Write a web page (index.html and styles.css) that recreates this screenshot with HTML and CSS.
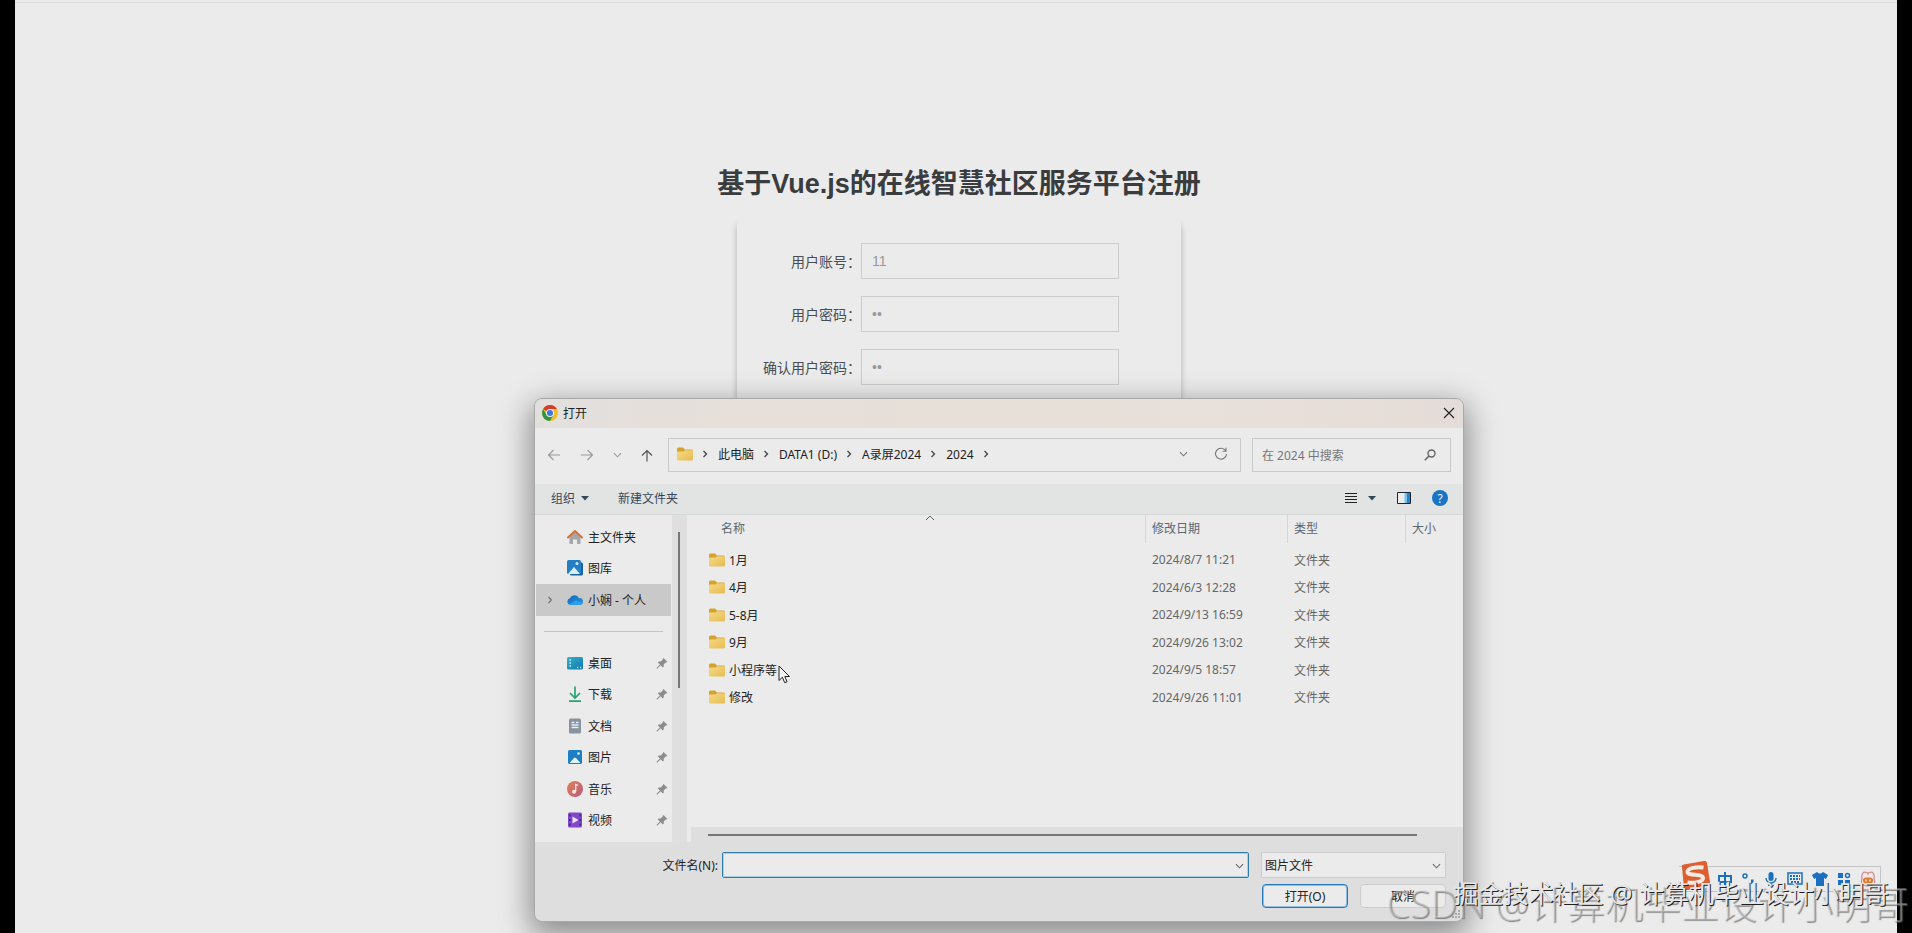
FILE: index.html
```
<!DOCTYPE html>
<html lang="zh-CN">
<head>
    <meta charset="UTF-8">
    <meta name="viewport" content="width=device-width, initial-scale=1.0">
    <title>基于Vue.js的在线智慧社区服务平台注册</title>
    <link rel="stylesheet" href="styles.css">
</head>
<body>
    <!-- shared icons -->
    <svg class="defs" width="0" height="0">
        <defs>
            <linearGradient id="folderFill" x1="0" y1="0" x2="1" y2="1">
                <stop offset="0" stop-color="#f6d988"/>
                <stop offset="1" stop-color="#e6bc50"/>
            </linearGradient>
            <linearGradient id="cloudFill" x1="0" y1="0" x2="1" y2="1">
                <stop offset="0" stop-color="#1265b8"/>
                <stop offset="1" stop-color="#2c9be6"/>
            </linearGradient>
            <linearGradient id="deskFill" x1="0" y1="0" x2="1" y2="1">
                <stop offset="0" stop-color="#35b3c4"/>
                <stop offset="1" stop-color="#1274b6"/>
            </linearGradient>
            <linearGradient id="musicFill" x1="0" y1="0" x2="1" y2="1">
                <stop offset="0" stop-color="#e08257"/>
                <stop offset="1" stop-color="#b85a7c"/>
            </linearGradient>
        </defs>
        <symbol id="folder" viewBox="0 0 16 14">
            <path d="M0 2a1.5 1.5 0 0 1 1.5-1.500h4.500l2 2h6.500A1.500 1.500 0 0 1 16 4v3H0z" fill="#d5a32c"/>
            <path d="M0 5.500a1 1 0 0 1 1-1h5.500l1.500-1.200h7a1 1 0 0 1 1 1V12a1.500 1.500 0 0 1-1.500 1.500h-13A1.500 1.500 0 0 1 0 12z" fill="url(#folderFill)"/>
        </symbol>
        <symbol id="chevron-right" viewBox="0 0 6 8">
            <path d="M1.500 1l3 3-3 3" fill="none" stroke="currentColor" stroke-width="1.300"/>
        </symbol>
        <symbol id="chevron-down" viewBox="0 0 10 6">
            <path d="M1 1l4 4 4-4" fill="none" stroke="currentColor" stroke-width="1.200"/>
        </symbol>
        <symbol id="caret" viewBox="0 0 8 5">
            <path d="M0 0h8L4 4.500z" fill="currentColor"/>
        </symbol>
        <symbol id="pin" viewBox="0 0 12 12">
            <path d="M7.500 1l4 4-1.200.6-.6-.2-2 2.200.1 1.900-1 .9-2.200-2.200L1.400 11.400l-.8.100.1-.8 3.200-3.200L1.700 5.300l1-.9 1.900.1 2.200-2-.1-.6z" fill="#8c8c8c"/>
        </symbol>
    </svg>

    <main class="page">
        <h1>基于Vue.js的在线智慧社区服务平台注册</h1>
        <form class="register">
            <div class="form-group">
                <label for="account">用户账号：</label>
                <input type="text" id="account" name="account" value="11">
            </div>
            <div class="form-group">
                <label for="password">用户密码：</label>
                <input type="password" id="password" name="password" value="11">
            </div>
            <div class="form-group">
                <label for="password2">确认用户密码：</label>
                <input type="password" id="password2" name="password2" value="11">
            </div>
        </form>
    </main>

    <section class="dialog" role="dialog" aria-label="打开">
        <header class="titlebar">
            <svg class="chrome" width="16" height="16" viewBox="0 0 16 16">
                <circle cx="8" cy="8" r="8" fill="#efbf2c"/>
                <path d="M8 8L1.100 4A8 8 0 0 1 14.900 4H8z" fill="#d63c2e"/>
                <path d="M1.100 4A8 8 0 0 0 8 16l3.500-6L8 8 4.600 10z" fill="#2f9548"/>
                <circle cx="8" cy="8" r="4" fill="#eee"/>
                <circle cx="8" cy="8" r="3" fill="#3b78d8"/>
            </svg>
            <span>打开</span>
            <button class="close" type="button" aria-label="关闭">
                <svg width="12" height="12" viewBox="0 0 12 12"><path d="M1 1l10 10M11 1L1 11" stroke="#222" stroke-width="1.100"/></svg>
            </button>
        </header>

        <div class="navbar">
            <div class="nav-buttons">
                <button type="button" aria-label="后退"><svg width="14" height="12" viewBox="0 0 14 12"><path d="M13 6H1.500M6.500 1l-5 5 5 5" fill="none" stroke="#999" stroke-width="1.100"/></svg></button>
                <button type="button" aria-label="前进"><svg width="14" height="12" viewBox="0 0 14 12"><path d="M1 6h11.500M7.500 1l5 5-5 5" fill="none" stroke="#999" stroke-width="1.100"/></svg></button>
                <button type="button" aria-label="最近"><svg width="9" height="6"><use href="#chevron-down"/></svg></button>
                <button type="button" aria-label="向上"><svg width="12" height="13" viewBox="0 0 12 13"><path d="M6 12.500V1.500M1 6.500l5-5 5 5" fill="none" stroke="#555" stroke-width="1.200"/></svg></button>
            </div>
            <div class="address">
                <svg width="16" height="14"><use href="#folder"/></svg>
                <svg class="sep" width="6" height="8"><use href="#chevron-right"/></svg>
                <a href="#">此电脑</a>
                <svg class="sep" width="6" height="8"><use href="#chevron-right"/></svg>
                <a href="#">DATA1 (D:)</a>
                <svg class="sep" width="6" height="8"><use href="#chevron-right"/></svg>
                <a href="#">A录屏2024</a>
                <svg class="sep" width="6" height="8"><use href="#chevron-right"/></svg>
                <a href="#">2024</a>
                <svg class="sep" width="6" height="8"><use href="#chevron-right"/></svg>
                <button class="history" type="button" aria-label="历史记录"><svg width="9" height="6"><use href="#chevron-down"/></svg></button>
                <button type="button" aria-label="刷新"><svg width="14" height="14" viewBox="0 0 14 14"><path d="M11.500 3.500A5.500 5.500 0 1 0 12.500 7M12 .8v3.400H8.600" fill="none" stroke="#777" stroke-width="1.100"/></svg></button>
            </div>
            <div class="search">
                <input type="text" placeholder="在 2024 中搜索" aria-label="搜索">
                <svg width="12" height="12" viewBox="0 0 12 12"><circle cx="7.500" cy="4.500" r="3.500" fill="none" stroke="#666" stroke-width="1.400"/><path d="M5 7L.8 11.200" stroke="#666" stroke-width="1.600"/></svg>
            </div>
        </div>

        <div class="toolbar">
            <button type="button">组织 <svg width="8" height="5"><use href="#caret"/></svg></button>
            <button type="button">新建文件夹</button>
            <div class="view-buttons">
                <button type="button" aria-label="视图">
                    <svg width="12" height="12" viewBox="0 0 12 12"><path d="M0 1.500h12M0 4.500h12M0 7.500h12M0 10.500h12" stroke="#222" stroke-width="1"/></svg>
                    <svg width="8" height="5"><use href="#caret"/></svg>
                </button>
                <button type="button" aria-label="预览窗格"><svg width="14" height="12" viewBox="0 0 14 12"><path d="M.5.5h13v11H.5z" fill="#eee" stroke="#1d2430"/><path d="M7.500 1H10v10H7.500z" fill="#7cc4ea"/><path d="M10 1h3v10h-3z" fill="#2386cb"/></svg></button>
                <button class="help" type="button" aria-label="帮助">?</button>
            </div>
        </div>

        <div class="browser">
            <nav class="sidebar">
                <ul>
                    <li>
                        <svg width="16" height="16" viewBox="0 0 16 16"><path d="M2.500 7.500L8 3l5.500 4.500V14a1 1 0 0 1-1 1H10v-4.500H6V15H3.500a1 1 0 0 1-1-1z" fill="#a5a8ab"/><path d="M1 8.500l7-6.500 7 6.500" fill="none" stroke="#d66f38" stroke-width="2" stroke-linejoin="round" stroke-linecap="round"/></svg>
                        <a href="#">主文件夹</a>
                    </li>
                    <li>
                        <svg width="16" height="16" viewBox="0 0 16 16"><rect x="3" y="2.500" width="13" height="13" rx="1.500" fill="#17629f"/><rect width="14" height="14" rx="1.500" fill="#257fc7"/><path d="M1 14l6-7 6 7z" fill="#d9edfa"/><circle cx="10" cy="3.500" r="1.500" fill="#cde9fb"/></svg>
                        <a href="#">图库</a>
                    </li>
                    <li class="selected">
                        <svg class="expand" width="6" height="8"><use href="#chevron-right"/></svg>
                        <svg width="16" height="16" viewBox="0 0 16 16"><path d="M3.500 13A3.400 3.400 0 0 1 3 6.300 5 5 0 0 1 12 6a3.500 3.500 0 0 1 1 7z" fill="url(#cloudFill)"/><path d="M2 12.500L9 8.500l6.500 2.500A3 3 0 0 1 13 13H3.500z" fill="#2f9fe9"/></svg>
                        <a href="#">小娴 - 个人</a>
                    </li>
                    <li class="divider"></li>
                    <li>
                        <svg width="16" height="16" viewBox="0 0 16 16"><rect y="2" width="16" height="12.500" rx="1.500" fill="url(#deskFill)"/><path d="M2.500 5h1.500M2.500 8h1.500M2.500 11h1.500M10 12.500h1.200M13 12.500h1.200" stroke="#cceff6" stroke-width="1.500"/></svg>
                        <a href="#">桌面</a>
                        <svg class="pin" width="12" height="12"><use href="#pin"/></svg>
                    </li>
                    <li>
                        <svg width="16" height="16" viewBox="0 0 16 16"><path d="M8 .5v11M3 7l5 5 5-5M2 15.200h12" fill="none" stroke="#27a473" stroke-width="1.700"/></svg>
                        <a href="#">下载</a>
                        <svg class="pin" width="12" height="12"><use href="#pin"/></svg>
                    </li>
                    <li>
                        <svg width="16" height="16" viewBox="0 0 16 16"><rect x="2" y=".5" width="12" height="15" rx="1.500" fill="#8793a1"/><path d="M4.500 4.500h3M4.500 7h7M4.500 9.500h7M9 4.500h2.500" stroke="#e8ecf0" stroke-width="1.300"/></svg>
                        <a href="#">文档</a>
                        <svg class="pin" width="12" height="12"><use href="#pin"/></svg>
                    </li>
                    <li>
                        <svg width="16" height="16" viewBox="0 0 16 16"><rect x="1" y="1" width="14" height="14" rx="1.500" fill="#1c7fc4"/><path d="M2.500 14l4.500-5a1.300 1.300 0 0 1 2 0l4.500 5z" fill="#e3f3fc"/><circle cx="11.500" cy="4.500" r="1.300" fill="#e3f3fc"/></svg>
                        <a href="#">图片</a>
                        <svg class="pin" width="12" height="12"><use href="#pin"/></svg>
                    </li>
                    <li>
                        <svg width="16" height="16" viewBox="0 0 16 16"><circle cx="8" cy="8" r="8" fill="url(#musicFill)"/><path d="M8.700 10.500V3.500l2.300.8" fill="none" stroke="#f7e8e2" stroke-width="1.300"/><circle cx="7" cy="10.800" r="2" fill="#f7e8e2"/></svg>
                        <a href="#">音乐</a>
                        <svg class="pin" width="12" height="12"><use href="#pin"/></svg>
                    </li>
                    <li>
                        <svg width="16" height="16" viewBox="0 0 16 16"><rect x="1" y=".5" width="14" height="15" rx="1.500" fill="#8149c9"/><path d="M2.800 2.500v12M13.200 2.500v12" stroke="#45208a" stroke-width="1.600" stroke-dasharray="2 2.500"/><path d="M5.500 4.500l6 3.500-6 3.500z" fill="#efe4fa"/></svg>
                        <a href="#">视频</a>
                        <svg class="pin" width="12" height="12"><use href="#pin"/></svg>
                    </li>
                </ul>
            </nav>
            <div class="sidebar-scroll"></div>

            <div class="files">
                <svg class="sort" width="10" height="6" viewBox="0 0 10 6"><path d="M1 5l4-4 4 4" fill="none" stroke="#666"/></svg>
                <table>
                    <thead>
                        <tr><th class="col-name"><span>名称</span></th><th class="col-date"><span>修改日期</span></th><th class="col-type"><span>类型</span></th><th><span>大小</span></th></tr>
                    </thead>
                    <tbody>
                        <tr><td><svg width="16" height="14"><use href="#folder"/></svg>1月</td><td>2024/8/7 11:21</td><td>文件夹</td><td></td></tr>
                        <tr><td><svg width="16" height="14"><use href="#folder"/></svg>4月</td><td>2024/6/3 12:28</td><td>文件夹</td><td></td></tr>
                        <tr><td><svg width="16" height="14"><use href="#folder"/></svg>5-8月</td><td>2024/9/13 16:59</td><td>文件夹</td><td></td></tr>
                        <tr><td><svg width="16" height="14"><use href="#folder"/></svg>9月</td><td>2024/9/26 13:02</td><td>文件夹</td><td></td></tr>
                        <tr><td><svg width="16" height="14"><use href="#folder"/></svg>小程序等</td><td>2024/9/5 18:57</td><td>文件夹</td><td></td></tr>
                        <tr><td><svg width="16" height="14"><use href="#folder"/></svg>修改</td><td>2024/9/26 11:01</td><td>文件夹</td><td></td></tr>
                    </tbody>
                </table>
                <div class="files-scroll"></div>
            </div>
        </div>

        <footer class="actions">
            <div class="action-row">
                <label for="fileName">文件名(N):</label>
                <div class="combo file-name">
                    <input type="text" id="fileName" name="fileName">
                    <svg width="9" height="6"><use href="#chevron-down"/></svg>
                </div>
                <div class="combo file-type">
                    <select name="fileType" aria-label="文件类型"><option>图片文件</option></select>
                    <svg width="9" height="6"><use href="#chevron-down"/></svg>
                </div>
            </div>
            <div class="action-row">
                <button class="open" type="button">打开(O)</button>
                <button class="cancel" type="button">取消</button>
            </div>
        </footer>
        <svg class="grip" width="9" height="9" viewBox="0 0 9 9"><path d="M6 0h2v2H6zM3 3h2v2H3zM6 3h2v2H6zM0 6h2v2H0zM3 6h2v2H3zM6 6h2v2H6z" fill="#aaa"/></svg>
    </section>

    <svg class="cursor" width="13" height="19" viewBox="0 0 13 19"><path d="M1 1v14.500l3.400-3.200 2.300 5.400 2.400-1-2.300-5.200h4.700z" fill="#f4f4f4" stroke="#222" stroke-width="1"/></svg>

    <!-- input method bar -->
    <div class="ime">
        <svg class="ime-logo" width="32" height="30" viewBox="0 0 32 30"><path d="M3 6Q2 4 5 3.500L25 0q2.500-.5 3 2l3 19q.5 2.500-2 3L9 29q-3 .5-4-2z" fill="#dd5f30"/><path d="M24.500 6.500C18 5.500 8 7 8.500 11c.5 4.500 15.500 1 15.500 6 0 4-9 5.500-15.500 4.500" fill="none" stroke="#f4ebe6" stroke-width="4"/></svg>
        <svg width="14" height="14" viewBox="0 0 14 14"><path d="M1 4h12v6H1zM7 0v14" fill="none" stroke="#1c6fc0" stroke-width="2"/></svg>
        <svg width="14" height="14" viewBox="0 0 14 14"><circle cx="4" cy="4" r="2" fill="none" stroke="#1c6fc0" stroke-width="1.500"/><path d="M10 7.500h2.500v2.500L10 12.500z" fill="#1c6fc0"/></svg>
        <svg width="14" height="14" viewBox="0 0 14 14"><rect x="4.500" y="0" width="5" height="9" rx="2.500" fill="#1c6fc0"/><path d="M2 6a5 5 0 0 0 10 0M7 11v3M4 13.500h6" fill="none" stroke="#1c6fc0" stroke-width="1.400"/></svg>
        <svg width="16" height="14" viewBox="0 0 16 14"><rect x="1" y="1" width="14" height="11" fill="none" stroke="#1c6fc0" stroke-width="1.500"/><path d="M3 4h10M3 7h10M4 10h8" stroke="#1c6fc0" stroke-width="1.800" stroke-dasharray="2 1"/></svg>
        <svg width="16" height="14" viewBox="0 0 16 14"><path d="M5 0q3 3 6 0l5 3-2 4-2-1v8H4V6L2 7 0 3z" fill="#1c6fc0"/></svg>
        <svg width="14" height="14" viewBox="0 0 14 14"><path d="M1 1h5v5H1zM1 8h5v5H1zM8 8h5v5H8z" fill="#1c6fc0"/><circle cx="10.500" cy="3.500" r="2" fill="none" stroke="#1c6fc0" stroke-width="1.500"/></svg>
        <svg width="16" height="16" viewBox="0 0 16 16"><path d="M2 8C1 3 4 0 5.500 1.500Q7 .8 8 3 9 .8 10.500 1.500C12 0 15 3 14 8c2 5-1 7-6 7s-8-2-6-7z" fill="none" stroke="#d88c92" stroke-width="1.300"/><rect x="3" y="6.500" width="10" height="6" rx="3" fill="#dc7d34"/><path d="M6 8.500v2M10 8.500v2" stroke="#fff"/></svg>
    </div>

    <div class="mark mark-back">CSDN @计算机毕业设计小明哥</div>
    <div class="mark mark-front">掘金技术社区 @ 计算机毕业设计小明哥</div>
</body>
</html>
```
FILE: styles.css
```
* {
    box-sizing: border-box;
}

body {
    position: relative;
    min-height: 100vh;
    margin: 0;
    padding: 0 15px;
    background: #000;
    font-family: "Noto Sans", "Noto Sans CJK SC", sans-serif;
    font-size: 12px;
    overflow: hidden;
}

.defs {
    position: absolute;
}

button {
    padding: 0;
    border: 0;
    background: none;
    font: inherit;
    color: inherit;
}

a {
    color: inherit;
    text-decoration: none;
}

svg {
    flex: none;
}

/* register page */
.page {
    min-height: 100vh;
    padding: 160px 0 0 6px;
    background: linear-gradient(#ebebeb 2px, #dadada 2px, #dadada 3px, #ebebeb 3px);
    display: flex;
    flex-direction: column;
    align-items: center;
    font-family: "Liberation Sans", "Noto Sans CJK SC", sans-serif;
}

h1 {
    margin: 0 0 10px;
    font-size: 27px;
    line-height: 48px;
    color: #3a3c3e;
    white-space: nowrap;
}

.register {
    width: 444px;
    height: 540px;
    padding: 25px 62px;
    border-radius: 6px;
    box-shadow: 0 6px 6px rgba(0, 0, 0, 0.25);
}

.form-group {
    display: flex;
    justify-content: flex-end;
    align-items: center;
    margin-bottom: 17px;
}

.form-group label {
    font-size: 14px;
    color: #4a4d52;
    white-space: nowrap;
}

.form-group input {
    width: 258px;
    height: 36px;
    flex: none;
    padding: 0 10px;
    border: 1px solid #ccc;
    background: #ebebeb;
    font-family: inherit;
    font-size: 14px;
    color: #999;
}

/* file dialog window */
.dialog {
    position: absolute;
    top: 398px;
    left: calc(50% - 422px);
    width: 930px;
    border: 1px solid #a9a9a9;
    border-radius: 8px;
    background: #dedede;
    box-shadow: 0 10px 30px 4px rgba(0, 0, 0, 0.4);
    color: #222;
    overflow: hidden;
}

.titlebar {
    display: flex;
    align-items: center;
    gap: 5px;
    height: 29px;
    padding: 0 8px 2px 7px;
    background: linear-gradient(90deg, #e2e0dd, #e7dfda 25%, #e6e0d8 50%, #e8dfda 80%, #e4dcd8);
}

.close {
    margin-left: auto;
    display: flex;
}

.navbar {
    display: flex;
    align-items: flex-start;
    padding: 10px 12px 12px;
    background: #ebebeb;
}

.navbar button {
    display: flex;
    justify-content: center;
    align-items: center;
}

.nav-buttons {
    display: flex;
    align-items: center;
    gap: 19px;
    width: 121px;
    height: 34px;
    color: #999;
}

.address {
    flex: 1;
    display: flex;
    align-items: center;
    height: 34px;
    padding: 0 12px 2px 8px;
    border: 1px solid #c9c9c9;
}

.address .sep {
    margin: 0 10px 0 9px;
    color: #444;
}

.history {
    margin: 0 26px 0 auto;
    color: #777;
}

.search {
    display: flex;
    align-items: center;
    width: 199px;
    height: 34px;
    margin-left: 11px;
    padding: 0 14px 0 9px;
    border: 1px solid #c9c9c9;
}

.search input {
    flex: 1;
    min-width: 0;
    padding: 0;
    border: 0;
    background: none;
    font: inherit;
}

.search input::placeholder {
    color: #777;
}

.toolbar {
    display: flex;
    align-items: center;
    gap: 29px;
    height: 31px;
    padding: 0 15px 2px 16px;
    border-bottom: 1px solid #d6d8d8;
    background: #e2e4e4;
    color: #34485c;
}

.toolbar button {
    display: flex;
    align-items: center;
    gap: 6px;
}

.toolbar .view-buttons {
    margin-left: auto;
    display: flex;
    gap: 21px;
}

.toolbar .view-buttons button:first-child {
    gap: 11px;
}

.toolbar .help {
    justify-content: center;
    width: 16px;
    height: 16px;
    border-radius: 50%;
    background: #1874c4;
    color: #f0f4f8;
}

.browser {
    display: flex;
    height: 327px;
}

.sidebar {
    width: 137px;
    padding: 6px 1px;
    background: #ebebeb;
}

.sidebar ul {
    display: grid;
    grid-template-rows: repeat(10, 1fr);
    height: 315px;
    margin: 0;
    padding: 0;
    list-style: none;
}

.sidebar li {
    position: relative;
    display: flex;
    align-items: center;
    gap: 5px;
    padding: 0 3px 0 31px;
    white-space: nowrap;
}

.sidebar .selected {
    background: #c9c9c9;
}

.sidebar .expand {
    position: absolute;
    left: 11px;
    color: #777;
}

.sidebar .divider::before {
    content: "";
    width: 119px;
    margin-left: -23px;
    border-top: 1px solid #c4c4c4;
}

.sidebar .pin {
    margin-left: auto;
}

.sidebar-scroll {
    width: 15px;
    padding: 17px 6px;
    background: #dfdfdf;
}

.sidebar-scroll::before {
    content: "";
    display: block;
    width: 2px;
    height: 156px;
    background: #777;
}

.files {
    position: relative;
    flex: 1;
    display: flex;
    flex-direction: column;
    justify-content: space-between;
    background: #ebebeb;
}

.sort {
    position: absolute;
    top: 0;
    left: 238px;
}

table {
    width: 100%;
    height: 196px;
    table-layout: fixed;
    border-collapse: separate;
    border-spacing: 0;
    color: #666;
}

th {
    height: 31px;
    padding: 0;
    font-weight: normal;
    text-align: left;
    vertical-align: top;
    color: #5d6570;
}

th span {
    display: block;
    padding-left: 6px;
    border-left: 1px solid #d6d6d6;
    line-height: 28px;
}

.col-name {
    width: 458px;
}

.col-name span {
    padding-left: 34px;
    border-left: 0;
}

.col-date {
    width: 142px;
}

.col-type {
    width: 118px;
}

td {
    padding: 0 0 0 7px;
}

td:first-child {
    padding-left: 22px;
    color: #222;
}

td svg {
    margin-right: 4px;
    vertical-align: -2px;
}

.files-scroll {
    height: 15px;
    margin-left: 4px;
    padding: 7px 46px 0 17px;
    background: #dedede;
}

.files-scroll::before {
    content: "";
    display: block;
    height: 2px;
    background: #777;
}

/* dialog bottom */
.actions {
    padding: 10px 17px 12px;
}

.action-row {
    display: flex;
    justify-content: flex-end;
    align-items: center;
    height: 26px;
    margin-bottom: 5px;
}

.action-row:last-child {
    gap: 12px;
    margin-bottom: 0;
}

.combo {
    position: relative;
    display: flex;
    height: 26px;
}

.combo svg {
    position: absolute;
    top: 11px;
    right: 5px;
    color: #666;
}

.file-name {
    width: 527px;
    margin: 0 12px 0 4px;
}

.file-type {
    width: 185px;
}

.combo input,
.combo select {
    width: 100%;
    padding: 0 3px;
    border: 1px solid #ccc;
    border-radius: 1px;
    background: #ebebeb;
    font: inherit;
    color: #222;
    appearance: none;
}

.combo input {
    border-color: #2f7ca8;
    border-radius: 2px;
    outline: 1px solid #a8cfe2;
    outline-offset: -2px;
}

.open,
.cancel {
    width: 86px;
    height: 24px;
    border: 1px solid #ccc;
    border-radius: 4px;
    background: #ebebeb;
}

.open {
    border-color: #2277b8;
    box-shadow: inset 0 0 0 1px #8fbedf;
}

.grip {
    position: absolute;
    right: 2px;
    bottom: 2px;
}

.cursor {
    position: absolute;
    top: 665px;
    left: calc(50% - 178px);
}

/* input method bar */
.ime {
    position: absolute;
    right: 31px;
    top: 866px;
    display: flex;
    align-items: center;
    gap: 9px;
    height: 26px;
    padding: 0 4px 0 0;
    border: 1px solid #c4c4c4;
    border-left: 0;
}

.ime-logo {
    margin: -6px -2px 0 0;
}

/* watermarks */
.mark {
    position: absolute;
    white-space: nowrap;
}

.mark-back {
    right: 3px;
    bottom: 4px;
    font-size: 38px;
    line-height: 52px;
    font-weight: 300;
    color: rgba(235, 235, 235, 0.4);
    text-shadow: 1px 1px 1px rgba(90, 90, 90, 0.7);
}

.mark-front {
    right: 23px;
    bottom: 22px;
    font-size: 25px;
    line-height: 36px;
    color: #e6e6e6;
    text-shadow: 1px 1px 0 #222;
}
```
